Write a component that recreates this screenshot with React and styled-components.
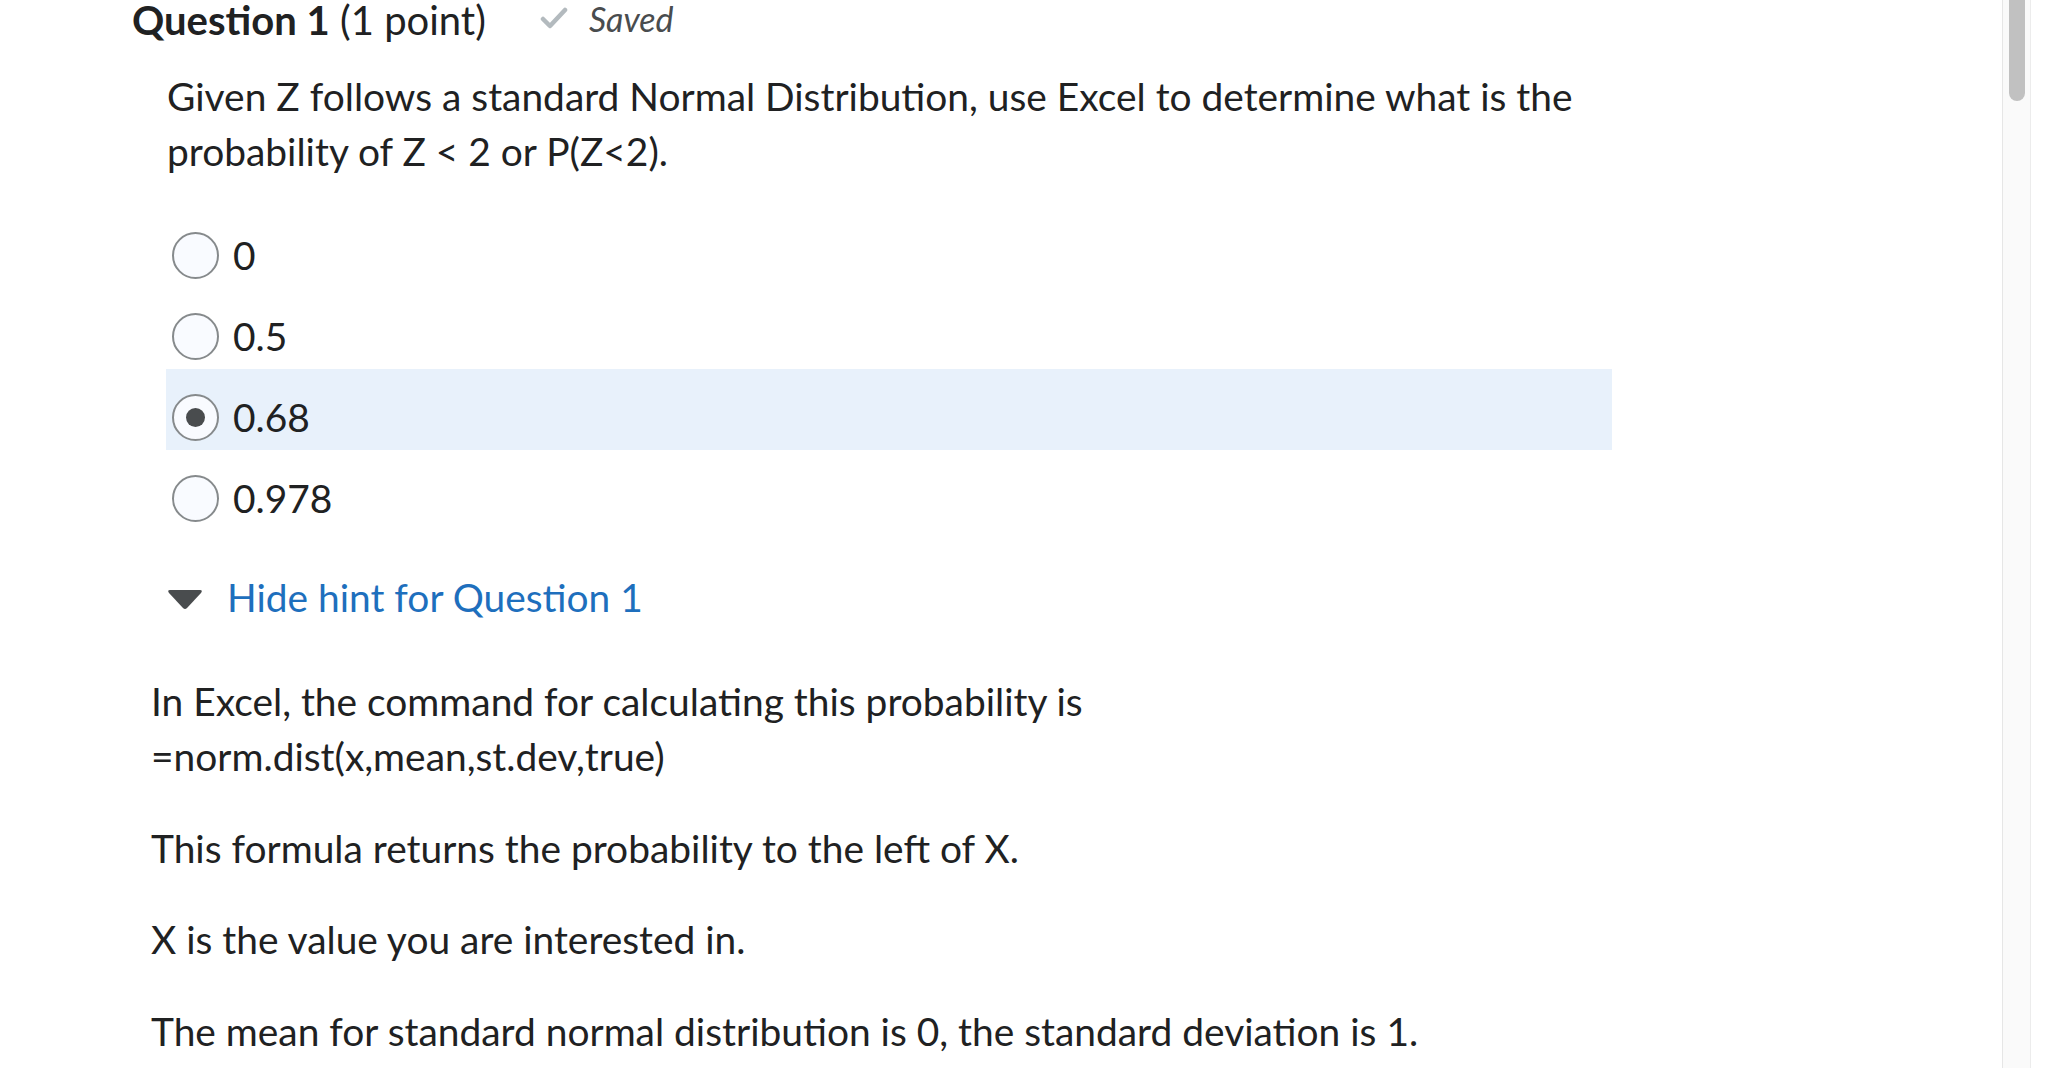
import React from "react";
import styled, { createGlobalStyle } from "styled-components";

const Global = createGlobalStyle`
  html, body { margin: 0; padding: 0; background: #ffffff; }
  body { font-family: Lato, "Noto Sans", "Liberation Sans", sans-serif; color: #202122; overflow: hidden; }
`;

const Page = styled.div`
  display: flex;
  width: 2058px;
  height: 1068px;
  overflow: hidden;
  background: #fff;
`;

const Main = styled.main`
  flex: 1;
  padding-left: 132px;
  overflow: hidden;
`;

const Scrollbar = styled.div`
  width: 27px;
  margin-left: 2px;
  margin-right: 27px;
  height: 100%;
  background: #fafafa;
  border-left: 1px solid #e6e6e6;
  border-right: 1px solid #ececec;
  display: flex;
  justify-content: center;
`;

const Thumb = styled.div`
  width: 16px;
  height: 101px;
  background: #c1c1c1;
  border-radius: 0 0 8px 8px;
`;

const Header = styled.div`
  display: flex;
  align-items: center;
  height: 40px;
  gap: 54px;
`;

const Title = styled.h2`
  margin: 0;
  font-size: 40px;
  line-height: 40px;
  font-weight: 400;
  white-space: nowrap;
  b { font-weight: 700; }
`;

const Saved = styled.div`
  display: flex;
  align-items: center;
  gap: 21px;
  font-size: 34px;
  font-style: italic;
  color: #494c4e;
  margin-top: -4px;
`;

const Prompt = styled.p`
  margin: 29px 0 0 35px;
  width: 1460px;
  font-size: 38.9px;
  line-height: 55px;
`;

const Options = styled.div`
  margin: 28px 0 0 34px;
  width: 1446px;
  display: flex;
  flex-direction: column;
`;

const OptionRow = styled.label`
  display: flex;
  align-items: center;
  height: 81px;
  box-sizing: border-box;
  padding: 16px 0 0 6px;
  background: ${(p) => (p.$selected ? "#e8f1fb" : "transparent")};
  font-size: 38.9px;
  line-height: 55px;
`;

const Radio = styled.span`
  width: 47px;
  height: 47px;
  box-sizing: border-box;
  border-radius: 50%;
  border: 2px solid #868a8c;
  background: #f9fbff;
  display: flex;
  align-items: center;
  justify-content: center;
  margin-right: 14px;
  flex-shrink: 0;
  &::after {
    content: "";
    display: ${(p) => (p.$checked ? "block" : "none")};
    width: 19px;
    height: 19px;
    border-radius: 50%;
    background: #494c4e;
  }
`;

const HintToggle = styled.div`
  margin: 39px 0 0 35px;
  display: flex;
  align-items: center;
  gap: 24px;
  font-size: 38.9px;
  line-height: 55px;
  color: #1e6fbd;
  svg { margin-top: 3px; }
`;

const Hint = styled.div`
  margin: 49px 0 0 19px;
  width: 1520px;
`;

const HintPara = styled.p`
  margin: 0 0 36.5px 0;
  font-size: 38.9px;
  line-height: 55px;
`;

function CheckIcon() {
  return (
    <svg width="28" height="22" viewBox="0 0 28 22">
      <polyline
        points="3,12 10,19 25,3"
        fill="none"
        stroke="#b3babe"
        strokeWidth="4.5"
        strokeLinecap="round"
        strokeLinejoin="round"
      />
    </svg>
  );
}

function Caret() {
  return (
    <svg width="36" height="21" viewBox="0 0 36 21">
      <path
        d="M3 1 H33 Q36 1 34 4 L20 19 Q18 21 16 19 L2 4 Q0 1 3 1 Z"
        fill="#494c4e"
      />
    </svg>
  );
}

const options = [
  { label: "0" },
  { label: "0.5" },
  { label: "0.68", selected: true },
  { label: "0.978" },
];

export default function App() {
  return (
    <>
      <Global />
      <Page>
        <Main>
          <Header>
            <Title>
              <b>Question 1</b> (1 point)
            </Title>
            <Saved>
              <CheckIcon />
              <span>Saved</span>
            </Saved>
          </Header>
          <Prompt>
            Given Z follows a standard Normal Distribution, use Excel to determine what is the
            probability of Z &lt; 2 or P(Z&lt;2).
          </Prompt>
          <Options>
            {options.map((o) => (
              <OptionRow key={o.label} $selected={o.selected}>
                <Radio $checked={o.selected} />
                {o.label}
              </OptionRow>
            ))}
          </Options>
          <HintToggle>
            <Caret />
            <span>Hide hint for Question 1</span>
          </HintToggle>
          <Hint>
            <HintPara>
              In Excel, the command for calculating this probability is
              <br />
              =norm.dist(x,mean,st.dev,true)
            </HintPara>
            <HintPara>This formula returns the probability to the left of X.</HintPara>
            <HintPara>X is the value you are interested in.</HintPara>
            <HintPara>The mean for standard normal distribution is 0, the standard deviation is 1.</HintPara>
          </Hint>
        </Main>
        <Scrollbar>
          <Thumb />
        </Scrollbar>
      </Page>
    </>
  );
}
